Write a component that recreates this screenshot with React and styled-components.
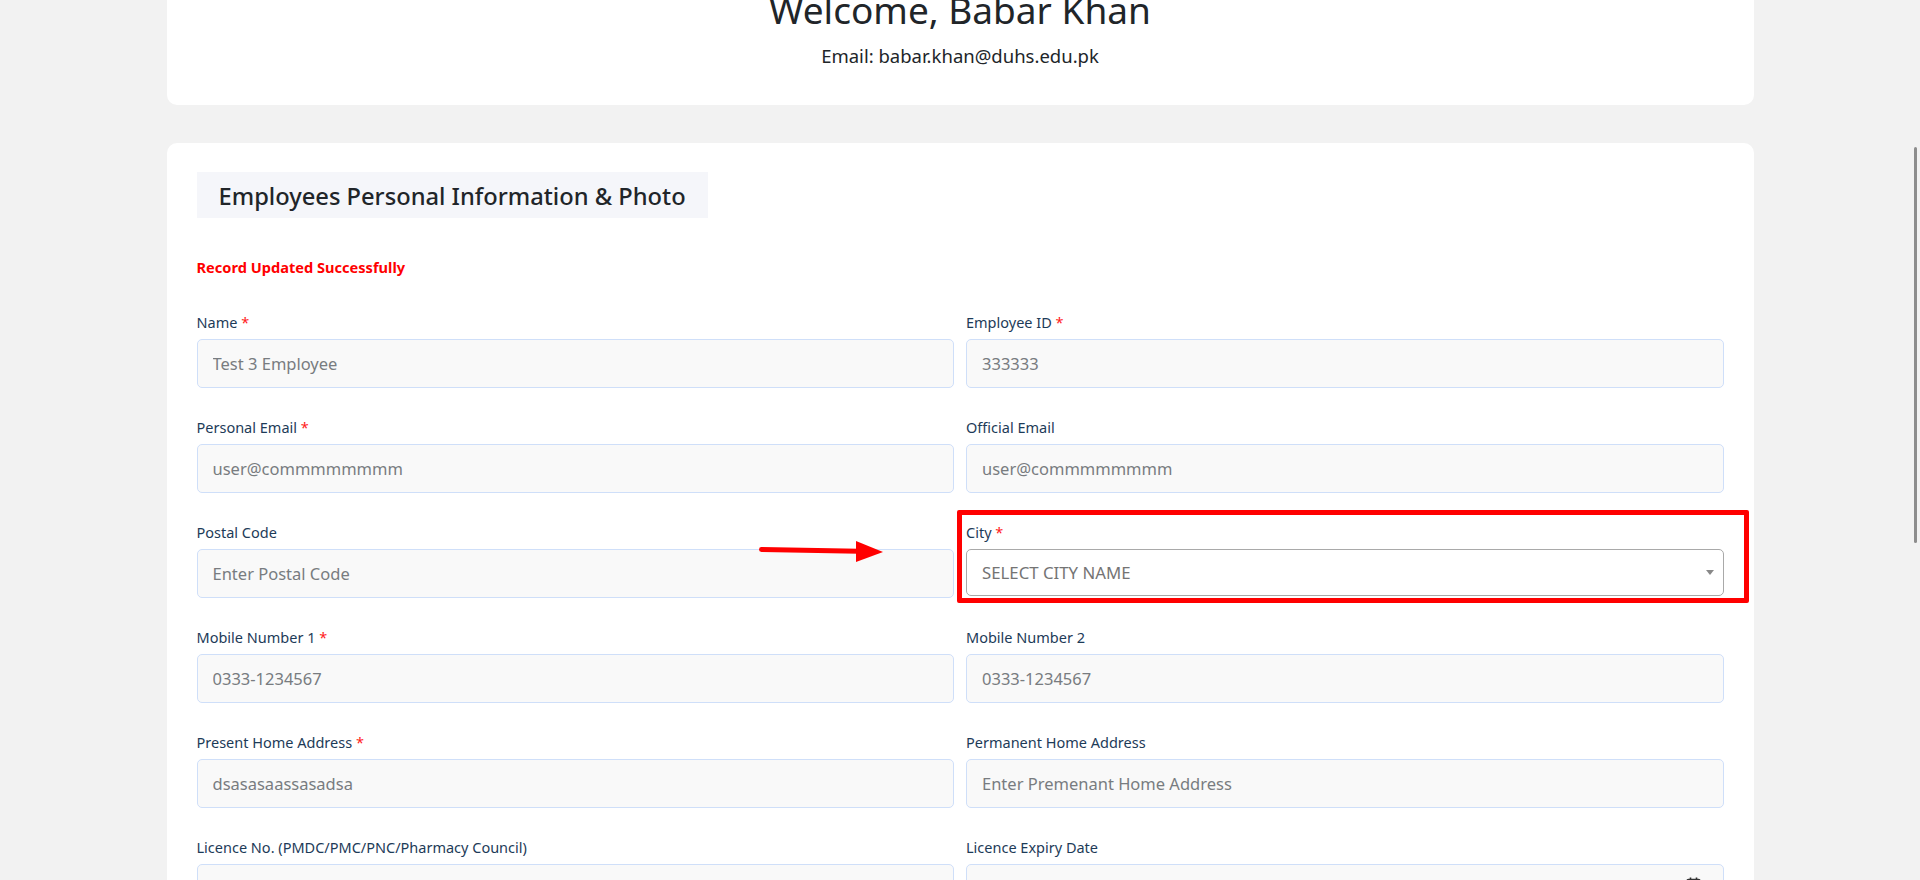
import React from "react";
import styled, { createGlobalStyle } from "styled-components";

const GlobalStyle = createGlobalStyle`
  * { box-sizing: border-box; }
  html, body {
    margin: 0;
    padding: 0;
    background: #f2f2f2;
    overflow: hidden;
  }
  body {
    font-family: "Noto Sans", "Open Sans", Arial, sans-serif;
    color: #212529;
  }
`;

const Page = styled.main`
  width: 1587px;
  margin: 0 auto;
`;

const TopCard = styled.section`
  margin-top: -42px;
  background: #ffffff;
  border-radius: 10px;
  padding: 30px 20px 35px;
  text-align: center;
`;

const Welcome = styled.h1`
  margin: 0;
  font-size: 37px;
  font-weight: 400;
  line-height: 1.2;
  color: #212529;
`;

const EmailLine = styled.p`
  margin: 10px 0 0;
  font-size: 18.5px;
  line-height: 1.5;
  color: #212529;
`;

const MainCard = styled.section`
  margin-top: 38px;
  background: #ffffff;
  border-radius: 10px;
  padding: 29px 30px 40px;
`;

const SectionTitle = styled.h4`
  display: inline-block;
  margin: 0;
  padding: 2px 22px 0 22px;
  line-height: 44px;
  font-size: 23.7px;
  font-weight: 500;
  background: #f5f6fa;
  color: #212529;
`;

const Notice = styled.p`
  margin: 37.5px 0 33px;
  font-size: 14.6px;
  line-height: 22px;
  font-weight: 700;
  color: #ff0000;
`;

const FormGrid = styled.div`
  display: grid;
  grid-template-columns: 1fr 1fr;
  column-gap: 12px;
`;

const Field = styled.div`
  position: relative;
  margin-bottom: 28px;
`;

const Label = styled.label`
  display: block;
  font-size: 14.5px;
  line-height: 22px;
  margin-bottom: 6px;
  color: #1d3b58;
`;

const Star = styled.span`
  color: #ff1a1a;
`;

const TextInput = styled.input`
  display: block;
  width: 100%;
  height: 49px;
  padding: 1px 15px 0;
  border: 1px solid #cfdff9;
  border-radius: 5px;
  background: #f9f9f9;
  font-family: inherit;
  font-size: 16.5px;
  color: #787c80;
  outline: none;
  &::placeholder {
    color: #787c80;
    opacity: 1;
  }
`;

const SelectBox = styled.div`
  display: flex;
  align-items: center;
  justify-content: space-between;
  height: 47px;
  padding: 1px 9px 0 15px;
  border: 1px solid #a9a9a9;
  border-radius: 5px;
  background: #ffffff;
  font-size: 16.8px;
  color: #747474;
`;

const Caret = styled.span`
  width: 0;
  height: 0;
  border-left: 4.5px solid transparent;
  border-right: 4.5px solid transparent;
  border-top: 5.5px solid #888888;
`;

const DateBox = styled.div`
  display: flex;
  justify-content: flex-end;
  align-items: flex-start;
  height: 49px;
  padding: 12px 22px 0 15px;
  border: 1px solid #cfdff9;
  border-radius: 5px;
  background: #f9f9f9;
  color: #333;
`;

const Highlight = styled.div`
  position: absolute;
  left: -9px;
  top: -10.5px;
  width: 792px;
  height: 93px;
  border: 5px solid #ff0000;
  border-radius: 2px;
  pointer-events: none;
`;

const PointerArrow = styled.svg`
  position: absolute;
  left: 562px;
  top: 19.5px;
  overflow: visible;
  pointer-events: none;
`;

const ScrollThumb = styled.div`
  position: fixed;
  top: 147px;
  right: 3px;
  width: 3.5px;
  height: 396px;
  border-radius: 2px;
  background: #8d8d8d;
`;

const email = "user@co" + "m".repeat(8);

const fields = [
  { label: "Name", req: true, value: "Test 3 Employee" },
  { label: "Employee ID", req: true, value: "333333" },
  { label: "Personal Email", req: true, value: email },
  { label: "Official Email", value: email },
  { label: "Postal Code", placeholder: "Enter Postal Code", arrow: true },
  { label: "City", req: true, select: "SELECT CITY NAME" },
  { label: "Mobile Number 1", req: true, value: "0333-1234567" },
  { label: "Mobile Number 2", placeholder: "0333-1234567" },
  { label: "Present Home Address", req: true, value: "dsasasaassasadsa" },
  { label: "Permanent Home Address", placeholder: "Enter Premenant Home Address" },
  { label: "Licence No. (PMDC/PMC/PNC/Pharmacy Council)", value: "" },
  { label: "Licence Expiry Date", date: true },
];

function CalendarIcon() {
  return (
    <svg width="15" height="16" viewBox="0 0 15 16" fill="none">
      <rect x="1" y="2.5" width="13" height="12.5" rx="1.5" stroke="#333" strokeWidth="1.4" />
      <line x1="4.5" y1="0.5" x2="4.5" y2="4" stroke="#333" strokeWidth="1.6" />
      <line x1="10.5" y1="0.5" x2="10.5" y2="4" stroke="#333" strokeWidth="1.6" />
      <line x1="1" y1="6.5" x2="14" y2="6.5" stroke="#333" strokeWidth="1.4" />
    </svg>
  );
}

function FormField({ f }) {
  return (
    <Field>
      <Label>
        {f.label}
        {f.req && <Star> *</Star>}
      </Label>
      {f.select ? (
        <SelectBox>
          <span>{f.select}</span>
          <Caret />
        </SelectBox>
      ) : f.date ? (
        <DateBox>
          <CalendarIcon />
        </DateBox>
      ) : (
        <TextInput
          type="text"
          readOnly
          defaultValue={f.value}
          placeholder={f.placeholder}
        />
      )}
      {f.select && <Highlight />}
      {f.arrow && (
        <PointerArrow width="126" height="24" viewBox="0 0 126 24">
          <line x1="2.5" y1="9.5" x2="100" y2="11.3" stroke="#ff0000" strokeWidth="5" strokeLinecap="round" />
          <polygon points="97,1 124,12 97,22" fill="#ff0000" />
        </PointerArrow>
      )}
    </Field>
  );
}

export default function App() {
  return (
    <>
      <GlobalStyle />
      <Page>
        <TopCard>
          <Welcome>Welcome, Babar Khan</Welcome>
          <EmailLine>Email: babar.khan@duhs.edu.pk</EmailLine>
        </TopCard>
        <MainCard>
          <SectionTitle>Employees Personal Information &amp; Photo</SectionTitle>
          <Notice>Record Updated Successfully</Notice>
          <FormGrid>
            {fields.map((f) => (
              <FormField key={f.label} f={f} />
            ))}
          </FormGrid>
        </MainCard>
      </Page>
      <ScrollThumb />
    </>
  );
}
